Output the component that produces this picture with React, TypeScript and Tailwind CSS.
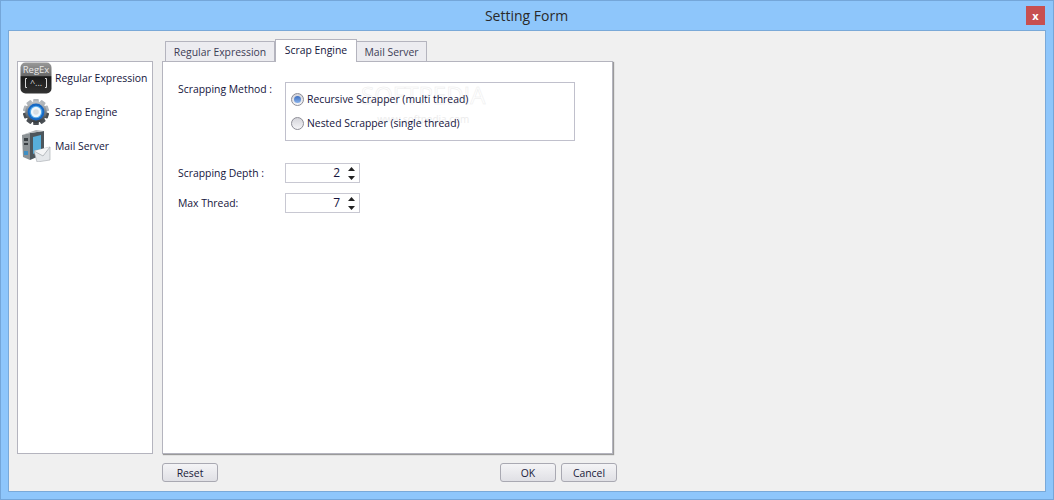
import React from "react";

const font = { fontFamily: '"Open Sans", "Noto Sans", sans-serif' };

function RegexIcon() {
  return (
    <svg width="32" height="32" viewBox="0 0 32 32">
      <defs>
        <linearGradient id="rg" x1="0" y1="0" x2="0" y2="1">
          <stop offset="0" stopColor="#9a9a9a" />
          <stop offset="0.42" stopColor="#6a6a6a" />
          <stop offset="0.46" stopColor="#1a1a1a" />
          <stop offset="1" stopColor="#333" />
        </linearGradient>
      </defs>
      <rect x="0.5" y="0.5" width="31" height="31" rx="5" fill="url(#rg)" />
      <text x="16" y="11" textAnchor="middle" fontSize="9.5" fill="#e8e8e8" fontFamily="Open Sans">RegEx</text>
      <path d="M7 16.5 H5.5 V25.5 H7 M25 16.5 H26.5 V25.5 H25" fill="none" stroke="#d8d8d8" strokeWidth="1" />
      <text x="16" y="24" textAnchor="middle" fontSize="9" fill="#d8d8d8" fontFamily="Open Sans">^...</text>
    </svg>
  );
}

function GearIcon() {
  const teeth = Array.from({ length: 10 }, (_, i) => i * 36);
  return (
    <svg width="28" height="28" viewBox="0 0 30 30">
      <defs>
        <linearGradient id="gg" x1="0" y1="0" x2="0" y2="1">
          <stop offset="0" stopColor="#c4c8cc" />
          <stop offset="0.5" stopColor="#7a8086" />
          <stop offset="1" stopColor="#34383c" />
        </linearGradient>
      </defs>
      <g>
        {teeth.map((a) => (
          <rect key={a} x="12" y="1" width="6" height="6" rx="1" fill={a > 90 && a < 270 ? "#4a4f54" : "#b0b5ba"} transform={`rotate(${a} 15 15)`} />
        ))}
      </g>
      <circle cx="15" cy="15" r="11.5" fill="url(#gg)" />
      <circle cx="15" cy="15" r="9" fill="#1668c4" />
      <circle cx="15" cy="15" r="6.8" fill="#4ea6ea" />
      <circle cx="15" cy="15" r="5.5" fill="#eef6fc" />
      <circle cx="15" cy="15" r="3" fill="#d7dde2" />
    </svg>
  );
}

function ServerIcon() {
  return (
    <svg width="30" height="32" viewBox="0 0 30 32">
      <path d="M1 5 L9 3 L9 30 L2 27 Z" fill="#8d9396" />
      <path d="M9 3 L23 1 L23 24 L9 30 Z" fill="#4d565c" />
      <path d="M1 5 L9 3 L23 1 L15 0 Z" fill="#b2b6b9" />
      <rect x="3" y="8" width="4" height="3" fill="#3a4044" />
      <rect x="3" y="13" width="4" height="2" fill="#3a4044" />
      <rect x="3" y="21" width="4" height="4" fill="#3f8fc4" />
      <path d="M12 7 L20 5 L20 20 L12 24 Z" fill="#57aeda" />
      <path d="M13 21 L29 17 L29 30 L16 32 Z" fill="#e4e7ea" stroke="#a2a8ac" strokeWidth="0.6" />
      <path d="M13 21 L22 26 L29 17" fill="#f4f5f6" stroke="#a2a8ac" strokeWidth="0.7" />
    </svg>
  );
}

function SideItem({ icon, label }: { icon: React.ReactNode; label: string }) {
  return (
    <div className="flex h-[34px] items-center pb-[2px]">
      <div className="w-[37px] shrink-0 pl-[2px]">
        <div className="flex w-[32px] justify-center">{icon}</div>
      </div>
      <span className="whitespace-nowrap">{label}</span>
    </div>
  );
}

function Radio({ checked, label }: { checked?: boolean; label: string }) {
  return (
    <div className="flex h-[24px] items-center gap-[3px]">
      <span className="flex h-[13px] w-[13px] items-center justify-center rounded-full border border-[#8d8d96] bg-gradient-to-b from-[#d4d4da] to-[#f5f5f7]">
        {checked && <span className="h-[7px] w-[7px] rounded-full bg-gradient-to-b from-[#3d6fc0] to-[#8ab2ea]" />}
      </span>
      <span>{label}</span>
    </div>
  );
}

function Spin({ value }: { value: string }) {
  return (
    <div className="flex h-[20px] w-[75px] items-center justify-end border border-[#c8c8d2] bg-white">
      <span className="text-[12px]">{value}</span>
      <div className="ml-[6px] mr-[3px] flex w-[10px] flex-col items-center gap-[5px]">
        <svg width="7" height="4" viewBox="0 0 7 4"><path d="M3.5 0 L7 4 H0 Z" fill="#222" /></svg>
        <svg width="7" height="4" viewBox="0 0 7 4"><path d="M3.5 4 L7 0 H0 Z" fill="#222" /></svg>
      </div>
    </div>
  );
}

function Btn({ label }: { label: string }) {
  return (
    <button className="h-[19px] w-[56px] rounded-[3px] border border-[#a9a9b2] bg-gradient-to-b from-[#f4f4f6] to-[#e0e0e5] text-[#1a1a3a]">
      {label}
    </button>
  );
}

export default function App() {
  return (
    <div style={font} className="flex h-[500px] w-[1054px] flex-col border border-[#74a6d9] bg-[#8ec6fb] text-[10.4px] leading-[14px] text-[#14143c]">
      <div className="flex h-[29px] shrink-0 items-center">
        <div className="flex-1 pl-[26px] text-center text-[14px] text-[#2a2a2a]">Setting Form</div>
        <div className="mr-[8px] flex h-[19px] w-[19px] items-center justify-center bg-[#c75050] text-[11px] font-bold leading-none text-white">x</div>
      </div>
      <div className="mx-[7px] mb-[7px] flex flex-1 gap-[9px] border border-[#7aa9d8] bg-[#f0f0f0] pb-[9px] pl-[8px] pr-[429px] pt-[9px]">
        <div className="mt-[21px] flex h-[393px] w-[136px] shrink-0 flex-col border border-[#b4b4be] bg-white">
          <SideItem icon={<RegexIcon />} label="Regular Expression" />
          <SideItem icon={<GearIcon />} label="Scrap Engine" />
          <SideItem icon={<ServerIcon />} label="Mail Server" />
        </div>
        <div className="flex flex-1 flex-col">
          <div className="z-10 flex h-[21px] items-end pl-[3px]">
            <div className="flex h-[20px] w-[110px] items-center justify-center rounded-t-[1px] border border-b-0 border-[#b4b4be] bg-[#ececf0] text-[#3c3c55]">Regular Expression</div>
            <div className="-mb-[1px] flex h-[23px] w-[82px] items-center justify-center border border-b-0 border-[#b4b4be] bg-white pb-[3px]">Scrap Engine</div>
            <div className="-ml-[1px] flex h-[20px] w-[71px] items-center justify-center rounded-t-[1px] border border-b-0 border-[#b4b4be] bg-[#ececf0] text-[#3c3c55]">Mail Server</div>
          </div>
          <div className="relative h-[393px] w-[451px] border border-[#b4b4be] bg-white pl-[15px] pt-[20px] shadow-[1px_1px_1px_#9a9a9a]">
            <div className="absolute left-[198px] top-[21px] flex flex-col items-center">
              <span className="text-[24px] leading-none text-white [-webkit-text-stroke:0.5px_#ececec]">SOFTPEDIA</span>
              <span className="mt-[7px] text-[10px] leading-none text-[#ececec]">www.softpedia.com</span>
            </div>
            <div className="relative">
              <div className="flex">
                <div className="w-[107px]">Scrapping Method :</div>
                <div className="flex h-[59px] w-[290px] flex-col justify-center border border-[#c0c0cc] pl-[5px] pb-[1px]">
                  <Radio checked label="Recursive Scrapper (multi thread)" />
                  <Radio label="Nested Scrapper (single thread)" />
                </div>
              </div>
              <div className="mt-[22px] flex items-center">
                <div className="w-[107px]">Scrapping Depth :</div>
                <Spin value="2" />
              </div>
              <div className="mt-[10px] flex items-center">
                <div className="w-[107px]">Max Thread:</div>
                <Spin value="7" />
              </div>
            </div>
          </div>
          <div className="mt-[9px] flex w-[455px] items-center gap-[5px]">
            <Btn label="Reset" />
            <div className="flex-1" />
            <Btn label="OK" />
            <Btn label="Cancel" />
          </div>
        </div>
      </div>
    </div>
  );
}
